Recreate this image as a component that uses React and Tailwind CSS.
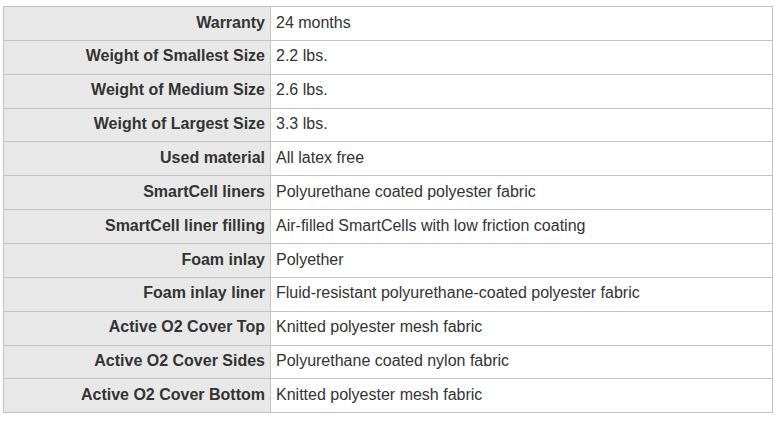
import React from 'react';

const specs = [
  ['Warranty', '24 months'],
  ['Weight of Smallest Size', '2.2 lbs.'],
  ['Weight of Medium Size', '2.6 lbs.'],
  ['Weight of Largest Size', '3.3 lbs.'],
  ['Used material', 'All latex free'],
  ['SmartCell liners', 'Polyurethane coated polyester fabric'],
  ['SmartCell liner filling', 'Air-filled SmartCells with low friction coating'],
  ['Foam inlay', 'Polyether'],
  ['Foam inlay liner', 'Fluid-resistant polyurethane-coated polyester fabric'],
  ['Active O2 Cover Top', 'Knitted polyester mesh fabric'],
  ['Active O2 Cover Sides', 'Polyurethane coated nylon fabric'],
  ['Active O2 Cover Bottom', 'Knitted polyester mesh fabric'],
];

export default function App() {
  return (
    <div className="min-h-screen bg-white pt-[6px] pl-[3px]" style={{ fontFamily: '"Liberation Sans", Arial, sans-serif' }}>
      <table className="w-[770px] border-collapse text-[16px] text-[#333]">
        <tbody>
          {specs.map(([label, value]) => (
            <tr key={label}>
              <th className="w-[267px] border border-[#c3c3c3] bg-[#e8e8e8] px-[5px] pt-[4.5px] pb-[5.5px] text-right font-bold leading-[22.857px]">
                {label}
              </th>
              <td className="border border-[#c3c3c3] bg-white px-[5px] pt-[4.5px] pb-[5.5px] text-left leading-[22.857px]">
                {value}
              </td>
            </tr>
          ))}
        </tbody>
      </table>
    </div>
  );
}
